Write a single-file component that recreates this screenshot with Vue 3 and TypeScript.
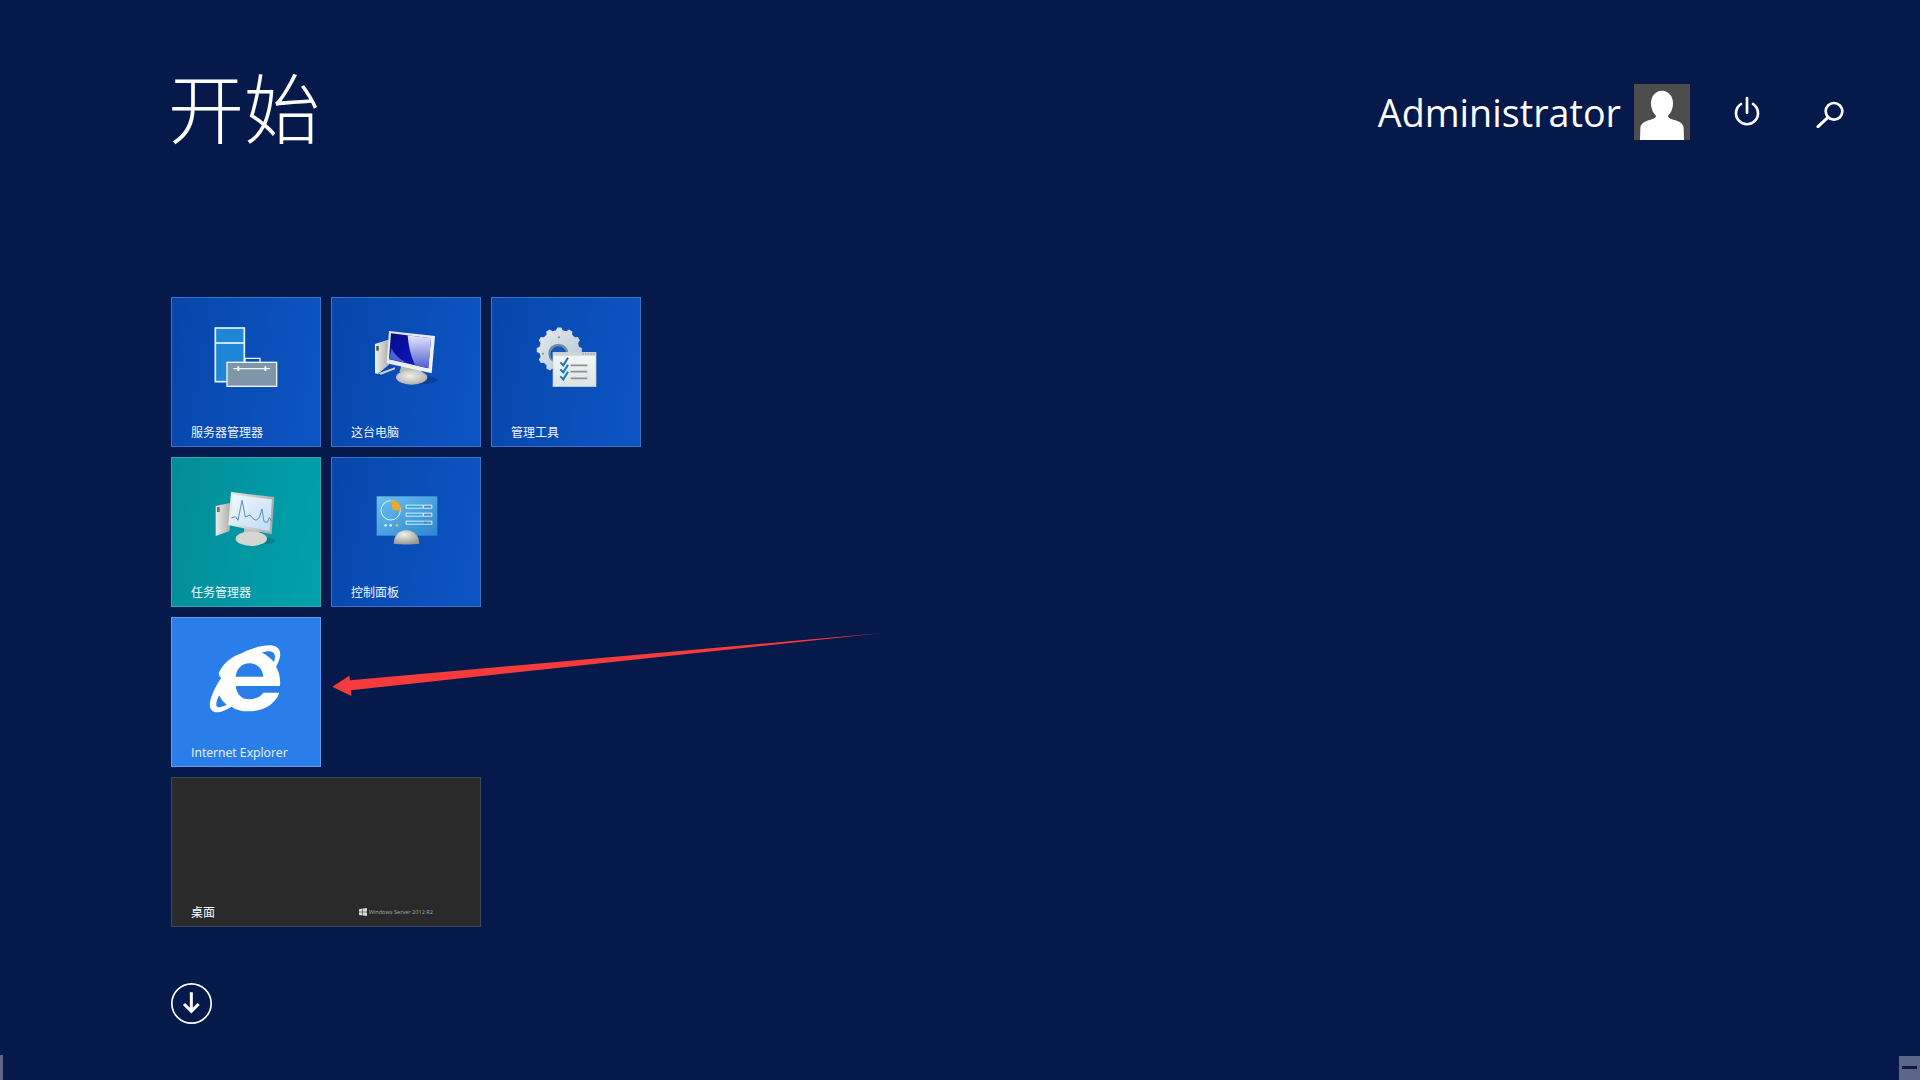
<script setup lang="ts">
interface Bar { y: number; fill: number }

const panelBars: Bar[] = [
  { y: 660, fill: 48 },
  { y: 684, fill: 48 },
  { y: 708, fill: 60 },
]

// 齿轮轮廓
function buildGear(cx: number, cy: number, outer: number, inner: number, teeth: number): string {
  const step = (Math.PI * 2) / teeth
  const pt = (r: number, a: number) =>
    `${(cx + r * Math.cos(a)).toFixed(1)} ${(cy + r * Math.sin(a)).toFixed(1)}`
  let d = ''
  for (let i = 0; i < teeth; i++) {
    const a = i * step
    d += `${i === 0 ? 'M' : 'L'}${pt(inner, a - step * 0.32)}`
    d += `L${pt(outer, a - step * 0.17)}L${pt(outer, a + step * 0.17)}L${pt(inner, a + step * 0.32)}`
  }
  return `${d}Z`
}

const gearPath = buildGear(103, 105, 68, 60, 12)
</script>

<template>
  <div class="start">
    <header class="header">
      <h1 class="title">开始</h1>
      <div class="user">
        <span class="user__name">Administrator</span>
        <svg class="user__avatar" viewBox="822 42 168 168">
          <rect x="822" y="42" width="168" height="168" fill="#4d4d4d" />
          <path
            fill="#fff"
            d="M906 62c20 0 33 17 33 38 0 17-7 30-15 37 0 6 6 9 22 14 17 5 24 12 25 24l1 35H840l1-35c1-12 8-19 25-24 16-5 22-8 22-14-8-7-15-20-15-37 0-21 13-38 33-38z"
          />
        </svg>
        <svg class="user__icon user__icon--power" viewBox="1113 81 96 96">
          <path d="M1161 87v44" />
          <path d="M1143 105a33 33 0 1 0 36 0" />
        </svg>
        <svg class="user__icon user__icon--search" viewBox="1362 81 96 96">
          <circle cx="1422" cy="127" r="25" />
          <path d="M1403 146l-29 27" stroke-width="9" />
        </svg>
      </div>
    </header>

    <main class="tiles">
      <div class="tile tile--blue">
        <svg class="tile__icon" viewBox="138 97 240 240">
          <rect x="166" y="130" width="87" height="161" fill="#1f85d6" stroke="#e8f4ff" stroke-width="5" />
          <path d="M166 175h87" stroke="#e8f4ff" stroke-width="5" />
          <rect x="201" y="233" width="149" height="72" fill="#7f95a8" stroke="#eef6fb" stroke-width="4" />
          <path d="M255 233v-12h45v12" fill="none" stroke="#eef6fb" stroke-width="4" />
          <path d="M220 252h110" stroke="#eef6fb" stroke-width="4" />
          <path d="M235 245v14M316 245v14" stroke="#eef6fb" stroke-width="6" />
        </svg>
        <span class="tile__label">服务器管理器</span>
      </div>

      <div class="tile tile--blue">
        <svg class="tile__icon" viewBox="3 -9 240 240">
          <defs>
            <linearGradient id="metal" x1="0" y1="0" x2="1" y2="0">
              <stop offset="0" stop-color="#f1f1ee" />
              <stop offset="1" stop-color="#a9aba8" />
            </linearGradient>
            <linearGradient id="frame" x1="0" y1="0" x2="1" y2="1">
              <stop offset="0" stop-color="#dfe5ea" />
              <stop offset="1" stop-color="#f4f5f2" />
            </linearGradient>
            <radialGradient id="stand" cx="0.45" cy="0.4" r="0.7">
              <stop offset="0" stop-color="#f0efeb" />
              <stop offset="1" stop-color="#a5a6a2" />
            </radialGradient>
            <linearGradient id="screen" x1="0" y1="0" x2="1" y2="0.6">
              <stop offset="0" stop-color="#090b86" />
              <stop offset="1" stop-color="#0a18c4" />
            </linearGradient>
            <linearGradient id="glare" x1="0" y1="0" x2="0" y2="1">
              <stop offset="0" stop-color="#e4e6fb" />
              <stop offset="1" stop-color="#4b5fd2" />
            </linearGradient>
          </defs>
          <ellipse cx="165" cy="180" rx="52" ry="13" fill="#05337f" opacity="0.55" />
          <path d="M30 72l44-14-2 76-34 28-8-2z" fill="url(#metal)" />
          <rect x="34" y="78" width="7" height="14" fill="#39502c" />
          <path d="M40 160l50-18v6l-42 16z" fill="#cfd0cc" />
          <path d="M110 135h55l6 22h-68z" fill="#b9bab5" />
          <ellipse cx="140" cy="172" rx="47" ry="22" fill="url(#stand)" />
          <path d="M72 33l138 15-10 112-135-30z" fill="url(#frame)" />
          <path d="M78 40l120 15-8 90-118-27z" fill="url(#screen)" />
          <path d="M128 46l70 9-8 90-40-9c-14-30-20-60-22-90z" fill="url(#glare)" />
          <path d="M80 85c6 14 20 32 46 44l-54-12z" fill="#5a78e0" opacity="0.8" />
        </svg>
        <span class="tile__label">这台电脑</span>
      </div>

      <div class="tile tile--blue">
        <svg class="tile__icon" viewBox="3 6 240 240">
          <defs>
            <linearGradient id="gear" x1="0" y1="0" x2="1" y2="1">
              <stop offset="0" stop-color="#e6ecf0" />
              <stop offset="1" stop-color="#b4c4d0" />
            </linearGradient>
            <linearGradient id="sheet" x1="0" y1="0" x2="0" y2="1">
              <stop offset="0" stop-color="#f6f8f8" />
              <stop offset="1" stop-color="#dde3e2" />
            </linearGradient>
          </defs>
          <path :d="gearPath" fill="url(#gear)" />
          <circle cx="100" cy="116" r="30" fill="#6f8ca6" />
          <circle cx="100" cy="118" r="24" fill="#1558bd" />
          <circle cx="102" cy="67" r="3" fill="#7f8f9c" />
          <circle cx="54" cy="116" r="3" fill="#7f8f9c" />
          <rect x="84" y="112" width="129" height="103" fill="url(#sheet)" stroke="#c3cdd0" stroke-width="2" />
          <path d="M85 113h127v9H85z" fill="#cdd5d8" />
          <path d="M172 117h36" stroke="#7d878d" stroke-width="3" stroke-dasharray="4 4" />
          <path
            d="M106 142l9 9 14-23M106 163l9 9 14-23M106 184l9 9 14-23"
            fill="none"
            stroke="#1677b8"
            stroke-width="6"
          />
          <path d="M137 151h50M137 170h50M137 190h50" stroke="#8b9297" stroke-width="5" />
        </svg>
        <span class="tile__label">管理工具</span>
      </div>

      <div class="tile tile--teal tile--row">
        <svg class="tile__icon" viewBox="138 577 240 240">
          <defs>
            <linearGradient id="graphBg" x1="0" y1="0" x2="1" y2="1">
              <stop offset="0" stop-color="#f2f8fd" />
              <stop offset="1" stop-color="#bcdcf3" />
            </linearGradient>
            <linearGradient id="metal2" x1="0" y1="0" x2="1" y2="0">
              <stop offset="0" stop-color="#ecece8" />
              <stop offset="1" stop-color="#a9aba8" />
            </linearGradient>
          </defs>
          <ellipse cx="292" cy="768" rx="54" ry="12" fill="#046e74" opacity="0.6" />
          <path d="M167 664l46-10-4 85-42 15z" fill="url(#metal2)" />
          <rect x="171" y="667" width="8" height="15" fill="#5f7d46" />
          <path d="M255 722h38l6 22h-48z" fill="#bdbeb9" />
          <ellipse cx="274" cy="762" rx="47" ry="22" fill="#d5d5d1" />
          <path d="M213 622l130 15-8 112-130-28z" fill="url(#metal2)" />
          <path d="M218 630l118 14-7 95-117-23z" fill="url(#graphBg)" />
          <path
            d="M214 700l12-4 8 11 12-60 10 50 14-6 8 10 10 6 10-8 8-26 6 38 10 2 6-14 6 10"
            fill="none"
            stroke="#3f7eb0"
            stroke-width="2.5"
          />
        </svg>
        <span class="tile__label">任务管理器</span>
      </div>

      <div class="tile tile--blue">
        <svg class="tile__icon" viewBox="618 577 240 240">
          <defs>
            <linearGradient id="panel" x1="0" y1="0" x2="1" y2="1">
              <stop offset="0" stop-color="#6cc0ee" />
              <stop offset="1" stop-color="#2c86cf" />
            </linearGradient>
            <radialGradient id="dome" cx="0.4" cy="0.3" r="0.8">
              <stop offset="0" stop-color="#f1efe9" />
              <stop offset="1" stop-color="#8e908c" />
            </radialGradient>
          </defs>
          <rect x="650" y="635" width="182" height="118" fill="url(#panel)" />
          <circle cx="692" cy="677" r="29" fill="none" stroke="#e2f3fc" stroke-width="3" />
          <path d="M692 646a30 30 0 0 1 31 31h-24z" fill="#f5a623" />
          <template v-for="bar in panelBars" :key="bar.y">
            <rect x="737" :y="bar.y" width="80" height="12" fill="#d9f0fb" />
            <rect x="740" :y="bar.y + 3" :width="bar.fill" height="6" fill="#2ba3dc" />
            <rect x="792" :y="bar.y + 3" width="22" height="6" fill="#5a7fa6" />
          </template>
          <circle cx="677" cy="722" r="4" fill="#cfeefc" />
          <circle cx="692" cy="722" r="4" fill="#cfeefc" />
          <circle cx="711" cy="722" r="4" fill="#f0b760" />
          <path d="M701 777c0-24 17-40 38-40s39 16 39 40c-20 3-57 3-77 0z" fill="url(#dome)" />
        </svg>
        <span class="tile__label">控制面板</span>
      </div>

      <div class="tile tile--ie tile--row">
        <svg class="tile__icon" viewBox="18 3 240 240">
          <path
            fill="#fff"
            fill-rule="evenodd"
            d="M240 150H107C110 175 125 190 147 190C165 190 182 182 190 170H238C225 205 190 226 145 226C125 226 108 222 95 212C78 222 58 232 44 228C28 224 26 205 34 183C40 165 50 145 64 125C60 125 58 120 56 112C66 88 90 62 125 52C150 38 185 28 210 28C232 28 244 42 240 62C238 72 234 82 228 92C238 108 242 128 240 150ZM107 122H190C188 98 170 82 148 82C126 82 110 98 107 122ZM186 50C200 56 214 68 222 78C226 66 226 54 220 50C214 44 200 44 186 50ZM58 178C50 192 47 205 50 211C54 216 68 213 80 206C70 198 63 190 58 178Z"
          />
        </svg>
        <span class="tile__label tile__label--latin">Internet Explorer</span>
      </div>

      <div class="tile tile--desktop tile--row">
        <div class="tile__foot">
          <span class="tile__label tile__label--bright">桌面</span>
          <span class="brand">
            <svg class="brand__logo" viewBox="0 0 8 8">
              <path d="M0 1.2l3.5-.6v3.2H0zM4 .5L8 0v3.8H4zM0 4.2h3.5v3.2L0 6.9zM4 4.2h4V8l-4-.6z" />
            </svg>
            Windows Server 2012 R2
          </span>
        </div>
      </div>
    </main>

    <svg class="all-apps" viewBox="33 640 123 123">
      <circle cx="94.5" cy="701.5" r="59" />
      <path d="M94 668v56M72 703l22 22 22-22" stroke-width="9" />
    </svg>

    <!-- 箭头标注 -->
    <svg class="arrow" viewBox="0 0 1920 1080">
      <path
        fill="#f53b3b"
        d="M332.3 686.7l17-11 .7 4.6L882 633 351 690.2l.3 5.8z"
      />
    </svg>

    <div class="edge edge--left"></div>
    <div class="edge edge--right"><span class="edge__dash"></span></div>
  </div>
</template>

<style>
html,
body {
  margin: 0;
  background: #05194b;
}
</style>

<style scoped>
.start {
  position: relative;
  width: 1920px;
  height: 1080px;
  overflow: hidden;
  background: #05194b;
  color: #fff;
  font-family: "Noto Sans CJK SC", sans-serif;
}

.header {
  display: flex;
  justify-content: space-between;
  align-items: flex-start;
  box-sizing: border-box;
  height: 297px;
  padding: 84px 74px 0 168px;
}

.title {
  margin: -29px 0 0;
  font-size: 76px;
  font-weight: 300;
  line-height: 100px;
}

.user {
  display: flex;
  align-items: center;
  height: 56px;
}

.user__name {
  margin: 2px 13px 0 0;
  font-family: "Open Sans", sans-serif;
  font-size: 37.7px;
  font-weight: 400;
  line-height: 56px;
}

.user__avatar {
  width: 56px;
  height: 56px;
}

.user__icon {
  width: 32px;
  height: 32px;
  fill: none;
  stroke: #fff;
  stroke-width: 8;
  stroke-linecap: round;
}

.user__icon--power {
  margin-left: 41px;
}

.user__icon--search {
  margin-left: 51px;
}

.tiles {
  display: grid;
  grid-template-columns: repeat(3, 150px);
  grid-auto-rows: 150px;
  gap: 10px;
  margin-left: 171px;
}

.tile {
  display: flex;
  flex-direction: column;
  align-items: center;
  box-sizing: border-box;
  padding: 19px 0 0;
  border: 1px solid #3d70c9;
}

.tile--row {
  grid-column-start: 1;
}

.tile--blue {
  background: linear-gradient(100deg, #0746ac, #0c55c3);
}

.tile--teal {
  border-color: #2fa9b2;
  background: linear-gradient(100deg, #028c98, #00a2ad);
}

.tile--ie {
  border-color: #5c9bf0;
  background: #2a7ee9;
}

.tile--desktop {
  grid-column: 1 / span 2;
  justify-content: flex-end;
  padding: 0;
  border-color: #3a4a5c;
  background: #2a2a2a;
}

.tile__icon {
  flex: none;
  width: 80px;
  height: 80px;
}

.tile__label {
  align-self: flex-start;
  margin: 26px 0 0 19px;
  font-size: 12px;
  line-height: 18px;
  white-space: nowrap;
  color: #eef5ff;
}

.tile__label--latin {
  margin-top: 27px;
  font-family: "Open Sans", sans-serif;
  font-size: 12.2px;
}

.tile__label--bright {
  margin-top: 0;
  color: #fff;
}

.tile__foot {
  display: flex;
  justify-content: space-between;
  align-items: center;
  align-self: stretch;
  padding: 0 47px 5px 0;
}

.brand {
  display: flex;
  align-items: center;
  gap: 2px;
  font-family: "Open Sans", sans-serif;
  font-size: 5.6px;
  color: #a8a8a8;
}

.brand__logo {
  width: 8px;
  height: 8px;
  fill: #d8d8d8;
}

.all-apps {
  display: block;
  width: 41px;
  height: 41px;
  margin: 56px 0 0 171px;
  fill: none;
  stroke: #fff;
  stroke-width: 5;
}

.arrow {
  position: absolute;
  top: 0;
  left: 0;
  width: 1920px;
  height: 1080px;
  pointer-events: none;
}

.edge {
  position: absolute;
  bottom: 0;
  background: #5b6689;
}

.edge--left {
  left: 0;
  width: 3px;
  height: 25px;
}

.edge--right {
  right: 0;
  display: flex;
  justify-content: center;
  width: 21px;
  height: 24px;
}

.edge__dash {
  width: 15px;
  height: 3px;
  margin-top: 10px;
  background: #0c1a3c;
}
</style>
